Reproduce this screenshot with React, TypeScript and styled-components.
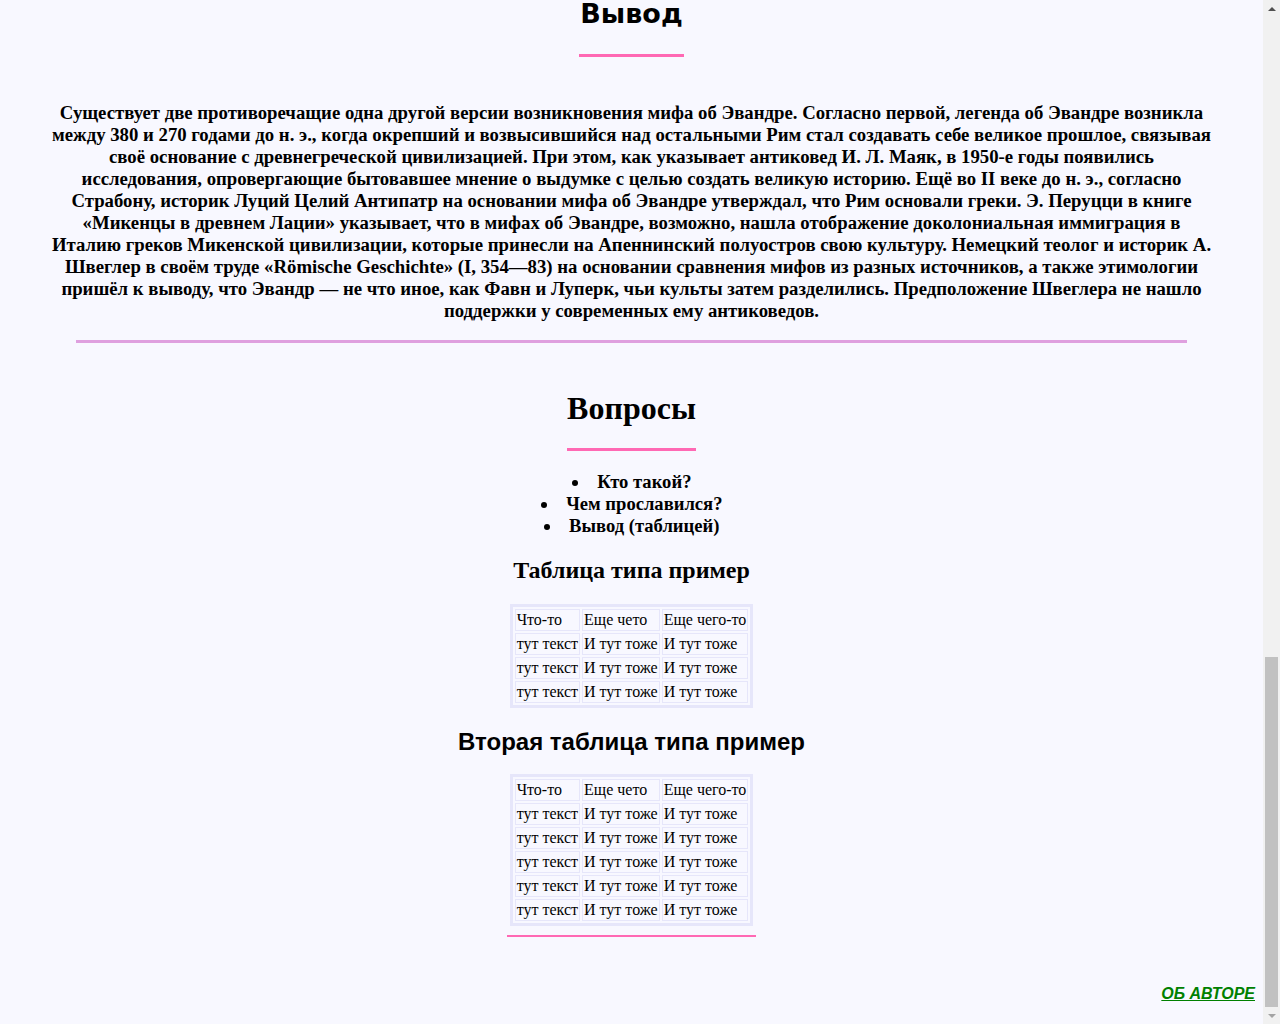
import React from 'react'
import styled, { createGlobalStyle } from 'styled-components'

const GlobalStyle = createGlobalStyle`
  body {
    margin: 0;
    background: #f8f8ff;
    color: #000;
    font-family: 'Liberation Serif', 'Times New Roman', serif;
  }
`

const Page = styled.div`
  display: flex;
  flex-direction: column;
  align-items: center;
  width: calc(100% - 17px);
  text-align: center;
  padding-bottom: 22px;
`

const Section = styled.section`
  display: flex;
  flex-direction: column;
  align-items: center;
  width: 100%;
`

const Title = styled.h1<{ $comic?: boolean }>`
  display: inline-block;
  margin: ${({ $comic }) => ($comic ? '-2px 0 0' : '-1px 0 0')};
  padding: ${({ $comic }) => ($comic ? '0 1px 25px' : '0 0 21px')};
  font-family: ${({ $comic }) =>
    $comic ? "'Comic Sans MS', 'DejaVu Sans', sans-serif" : "'Liberation Serif', serif"};
  font-size: ${({ $comic }) => ($comic ? '27px' : '32px')};
  font-weight: bold;
  border-bottom: 3px solid #ff69b4;
`

const Text = styled.p`
  margin: 45px 0 0;
  padding: 0 49px;
  font-size: 18.75px;
  font-weight: bold;
  line-height: 22px;
`

const Divider = styled.hr`
  width: 1111px;
  height: 3px;
  margin: 18px auto 0;
  border: none;
  background: #dfa0df;
`

const QuestionsBlock = styled(Section)`
  margin-top: 48px;
`

const List = styled.ul`
  list-style: disc inside;
  margin: 20px 0 0;
  padding: 0;
  font-size: 18.6px;
  font-weight: bold;
  line-height: 22px;
`

const SubTitle = styled.h2<{ $sans?: boolean }>`
  margin: 20px 0 0;
  font-family: ${({ $sans }) =>
    $sans ? "'Liberation Sans', Arial, sans-serif" : "'Liberation Serif', serif"};
  font-size: 24px;
  font-weight: bold;
`

const TableBox = styled.div<{ $underline?: boolean }>`
  display: inline-block;
  margin-top: ${({ $underline }) => ($underline ? '18px' : '20px')};
  padding: ${({ $underline }) => ($underline ? '0 3px 9px' : '0')};
  border-bottom: ${({ $underline }) => ($underline ? '2px solid #ff69b4' : 'none')};
`

const Table = styled.table`
  border: 3px solid #e6e6fa;
  border-spacing: 2px;
  font-size: 16px;
  text-align: left;
`

const Cell = styled.td`
  border: 1px solid #e6e6fa;
  padding: 1px;
`

const Footer = styled.div`
  align-self: stretch;
  display: flex;
  justify-content: flex-end;
  margin-top: 48px;
  padding-right: 8px;
`

const AuthorLink = styled.a`
  color: #008000;
  font-family: 'Liberation Sans', Arial, sans-serif;
  font-size: 16px;
  font-weight: bold;
  font-style: italic;
  text-decoration: underline;
`

// window scrollbar, page is scrolled to the bottom
const ScrollTrack = styled.div`
  position: fixed;
  top: 0;
  right: 0;
  bottom: 0;
  width: 17px;
  display: flex;
  flex-direction: column;
  background: #f1f1f1;
`

const ScrollArrow = styled.div`
  height: 17px;
  display: flex;
  align-items: center;
  justify-content: center;
`

const ScrollSpace = styled.div`
  flex: 1;
`

const ScrollThumb = styled.div`
  height: 350px;
  margin: 0 2px;
  background: #c1c1c1;
`

const summary =
  'Существует две противоречащие одна другой версии возникновения мифа об Эвандре. Согласно первой, легенда об Эвандре возникла между 380 и 270 годами до н. э., когда окрепший и возвысившийся над остальными Рим стал создавать себе великое прошлое, связывая своё основание с древнегреческой цивилизацией. При этом, как указывает антиковед И. Л. Маяк, в 1950-е годы появились исследования, опровергающие бытовавшее мнение о выдумке с целью создать великую историю. Ещё во II веке до н. э., согласно Страбону, историк Луций Целий Антипатр на основании мифа об Эвандре утверждал, что Рим основали греки. Э. Перуцци в книге «Микенцы в древнем Лации» указывает, что в мифах об Эвандре, возможно, нашла отображение доколониальная иммиграция в Италию греков Микенской цивилизации, которые принесли на Апеннинский полуостров свою культуру. Немецкий теолог и историк А. Швеглер в своём труде «Römische Geschichte» (I, 354—83) на основании сравнения мифов из разных источников, а также этимологии пришёл к выводу, что Эвандр — не что иное, как Фавн и Луперк, чьи культы затем разделились. Предположение Швеглера не нашло поддержки у современных ему антиковедов.'

const questions = ['Кто такой?', 'Чем прославился?', 'Вывод (таблицей)']
const header = ['Что-то', 'Еще чето', 'Еще чего-то']
const row = ['тут текст', 'И тут тоже', 'И тут тоже']

const DemoTable: React.FC<{ rows: number }> = ({ rows }) => (
  <Table>
    <tbody>
      <tr>
        {header.map((h) => (
          <Cell key={h}>{h}</Cell>
        ))}
      </tr>
      {Array.from({ length: rows }).map((_, i) => (
        <tr key={i}>
          {row.map((c, j) => (
            <Cell key={j}>{c}</Cell>
          ))}
        </tr>
      ))}
    </tbody>
  </Table>
)

const Scrollbar: React.FC = () => (
  <ScrollTrack>
    <ScrollArrow>
      <svg width="8" height="4" viewBox="0 0 8 4">
        <path d="M0 4 L4 0 L8 4 Z" fill="#505050" />
      </svg>
    </ScrollArrow>
    <ScrollSpace />
    <ScrollThumb />
    <ScrollArrow>
      <svg width="8" height="4" viewBox="0 0 8 4">
        <path d="M0 0 L8 0 L4 4 Z" fill="#a3a3a3" />
      </svg>
    </ScrollArrow>
  </ScrollTrack>
)

const App: React.FC = () => {
  return (
    <>
      <GlobalStyle />
      <Page>
        <Section>
          <Title $comic>Вывод</Title>
          <Text>{summary}</Text>
          <Divider />
        </Section>
        <QuestionsBlock>
          <Title>Вопросы</Title>
          <List>
            {questions.map((q) => (
              <li key={q}>{q}</li>
            ))}
          </List>
          <SubTitle>Таблица типа пример</SubTitle>
          <TableBox>
            <DemoTable rows={3} />
          </TableBox>
          <SubTitle $sans>Вторая таблица типа пример</SubTitle>
          <TableBox $underline>
            <DemoTable rows={5} />
          </TableBox>
        </QuestionsBlock>
        <Footer>
          <AuthorLink href="#">ОБ АВТОРЕ</AuthorLink>
        </Footer>
      </Page>
      <Scrollbar />
    </>
  )
}

export default App
